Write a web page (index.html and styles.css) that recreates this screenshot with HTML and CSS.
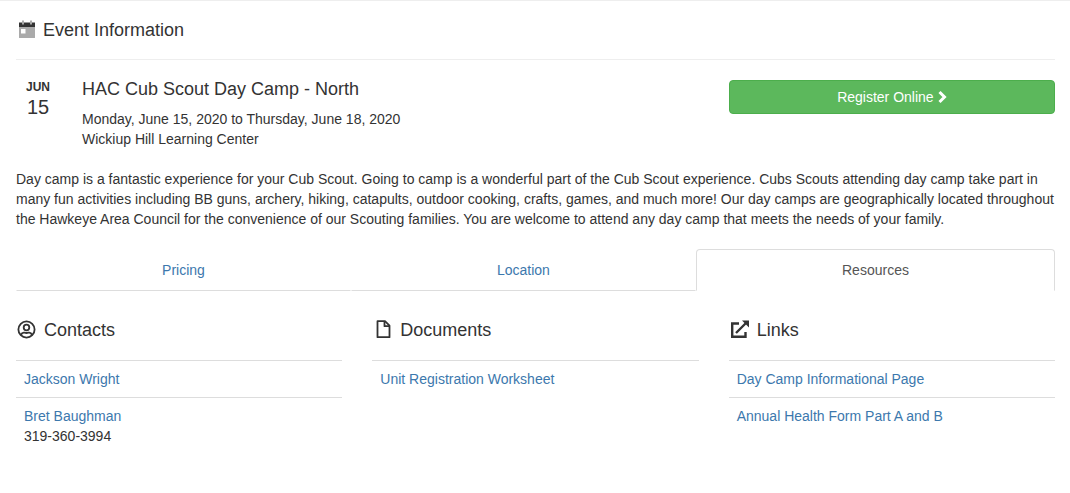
FILE: index.html
```html
<!DOCTYPE html>
<html lang="en">
<head>
    <meta charset="UTF-8">
    <meta name="viewport" content="width=device-width, initial-scale=1">
    <title>HAC Cub Scout Day Camp - North</title>
    <link rel="stylesheet" href="styles.css">
</head>
<body>
    <div class="container">
        <header class="page-title">
            <svg class="icon" viewBox="0 0 20 20" aria-hidden="true">
                <path fill="#aaa" d="M3 7h16v10.500q0 .5-.5.500h-15q-.5 0-.5-.5z"/>
                <path fill="#333" d="M3 2.500h16V7H3z"/>
                <path fill="#aaa" d="M6 .5h2v4H6zM14 .5h2v4h-2z"/>
                <path fill="#fff" d="M5 9h4.500v4.500H5z"/>
            </svg>
            <h1>Event Information</h1>
        </header>

        <section class="event">
            <div class="event-date">
                <span class="month">JUN</span>
                <span class="day">15</span>
            </div>
            <div class="event-info">
                <h2>HAC Cub Scout Day Camp - North</h2>
                <p>Monday, June 15, 2020 to Thursday, June 18, 2020</p>
                <p>Wickiup Hill Learning Center</p>
            </div>
            <button type="button" class="btn">
                Register Online
                <svg class="chevron" viewBox="0 0 9 14" aria-hidden="true">
                    <path fill="none" stroke="#fff" stroke-width="3" d="M1.500 2L6.500 7L1.500 12"/>
                </svg>
            </button>
        </section>

        <p class="description">Day camp is a fantastic experience for your Cub Scout. Going to camp is a wonderful part of the Cub Scout experience. Cubs Scouts attending day camp take part in many fun activities including BB guns, archery, hiking, catapults, outdoor cooking, crafts, games, and much more! Our day camps are geographically located throughout the Hawkeye Area Council for the convenience of our Scouting families. You are welcome to attend any day camp that meets the needs of your family.</p>

        <nav class="tabs">
            <a href="#pricing">Pricing</a>
            <a href="#location">Location</a>
            <a href="#resources" class="active">Resources</a>
        </nav>

        <div class="resources" id="resources">
            <section>
                <h3>
                    <svg class="icon" viewBox="0 0 20 20" fill="none" stroke="#333" stroke-width="1.800" aria-hidden="true">
                        <circle cx="10.500" cy="9.500" r="8.100"/>
                        <circle cx="10.500" cy="7.500" r="2.800"/>
                        <path d="M5 15C5.800 12.700 7.500 12.500 8.500 12.700Q10.500 13.300 12.500 12.700C13.500 12.500 15.200 12.700 16 15"/>
                    </svg>
                    Contacts
                </h3>
                <ul class="list">
                    <li><a href="#">Jackson Wright</a></li>
                    <li><a href="#">Bret Baughman</a><br>319-360-3994</li>
                </ul>
            </section>
            <section>
                <h3>
                    <svg class="icon" viewBox="0 0 20 20" fill="none" stroke="#333" stroke-width="1.800" stroke-linejoin="round" aria-hidden="true">
                        <path d="M5.500 1.200h7.500l4.500 4.500v11.500h-12z"/>
                        <path d="M12.500 1.500v4.700h4.700"/>
                    </svg>
                    Documents
                </h3>
                <ul class="list">
                    <li><a href="#">Unit Registration Worksheet</a></li>
                </ul>
            </section>
            <section>
                <h3>
                    <svg class="icon" viewBox="0 0 20 20" fill="none" stroke="#333" stroke-width="2.400" aria-hidden="true">
                        <path d="M10 3.500H3.200v13.300H16.500V12M7 13L17 3"/>
                        <path fill="#333" stroke="none" d="M13 .5h7v7z"/>
                    </svg>
                    Links
                </h3>
                <ul class="list">
                    <li><a href="#">Day Camp Informational Page</a></li>
                    <li><a href="#">Annual Health Form Part A and B</a></li>
                </ul>
            </section>
        </div>
    </div>
</body>
</html>
```
FILE: styles.css
```css
* {
    box-sizing: border-box;
}
body {
    margin: 0;
    border-top: 1px solid #eee;
    font-family: "Liberation Sans", Arial, sans-serif;
    font-size: 14px;
    line-height: 20px;
    color: #333;
    background: #fff;
}
h1, h2, h3 {
    margin: 0;
    font-size: 18px;
    font-weight: normal;
    line-height: 20px;
}
p {
    margin: 0;
}
a {
    color: #3c78ad;
    text-decoration: none;
}
.container {
    padding: 0 15px 0 16px;
}
.icon {
    width: 20px;
    height: 20px;
    flex: none;
}
.page-title {
    display: flex;
    align-items: center;
    gap: 7px;
    padding: 19px 0;
    border-bottom: 1px solid #eee;
}
.event {
    display: flex;
    align-items: flex-start;
    padding-top: 20px;
}
.event-date {
    width: 44px;
    margin-right: 22px;
    text-align: center;
}
.month, .day {
    display: block;
}
.month {
    font-size: 12px;
    font-weight: bold;
    line-height: 14px;
}
.day {
    font-size: 20px;
    line-height: 26px;
}
.event-info {
    flex: 1;
}
.event-info h2 {
    margin-bottom: 11px;
    line-height: 18px;
}
.btn {
    width: calc((100% - 60px) / 3);
    height: 34px;
    padding: 0 12px;
    border: 1px solid #4cae4c;
    border-radius: 4px;
    background: #5cb85c;
    color: #fff;
    font: inherit;
    cursor: pointer;
}
.btn:hover {
    background: #449d44;
}
.chevron {
    width: 9px;
    height: 14px;
    vertical-align: -2px;
}
.description {
    margin: 20px 0;
}
.tabs {
    display: flex;
}
.tabs a {
    flex: 1 1 auto;
    padding: 10px 15px;
    border: 1px solid transparent;
    border-bottom-color: #ddd;
    text-align: center;
}
.tabs .active {
    border-color: #ddd;
    border-bottom-color: transparent;
    border-radius: 4px 4px 0 0;
    color: #555;
}
.resources {
    display: grid;
    grid-template-columns: repeat(3, 1fr);
    gap: 30px;
    padding-top: 29px;
}
.resources h3 {
    display: flex;
    align-items: center;
    gap: 8px;
    margin-bottom: 20px;
}
.list {
    margin: 0;
    padding: 0;
    list-style: none;
}
.list li {
    padding: 8px;
    border-top: 1px solid #ddd;
}
```
